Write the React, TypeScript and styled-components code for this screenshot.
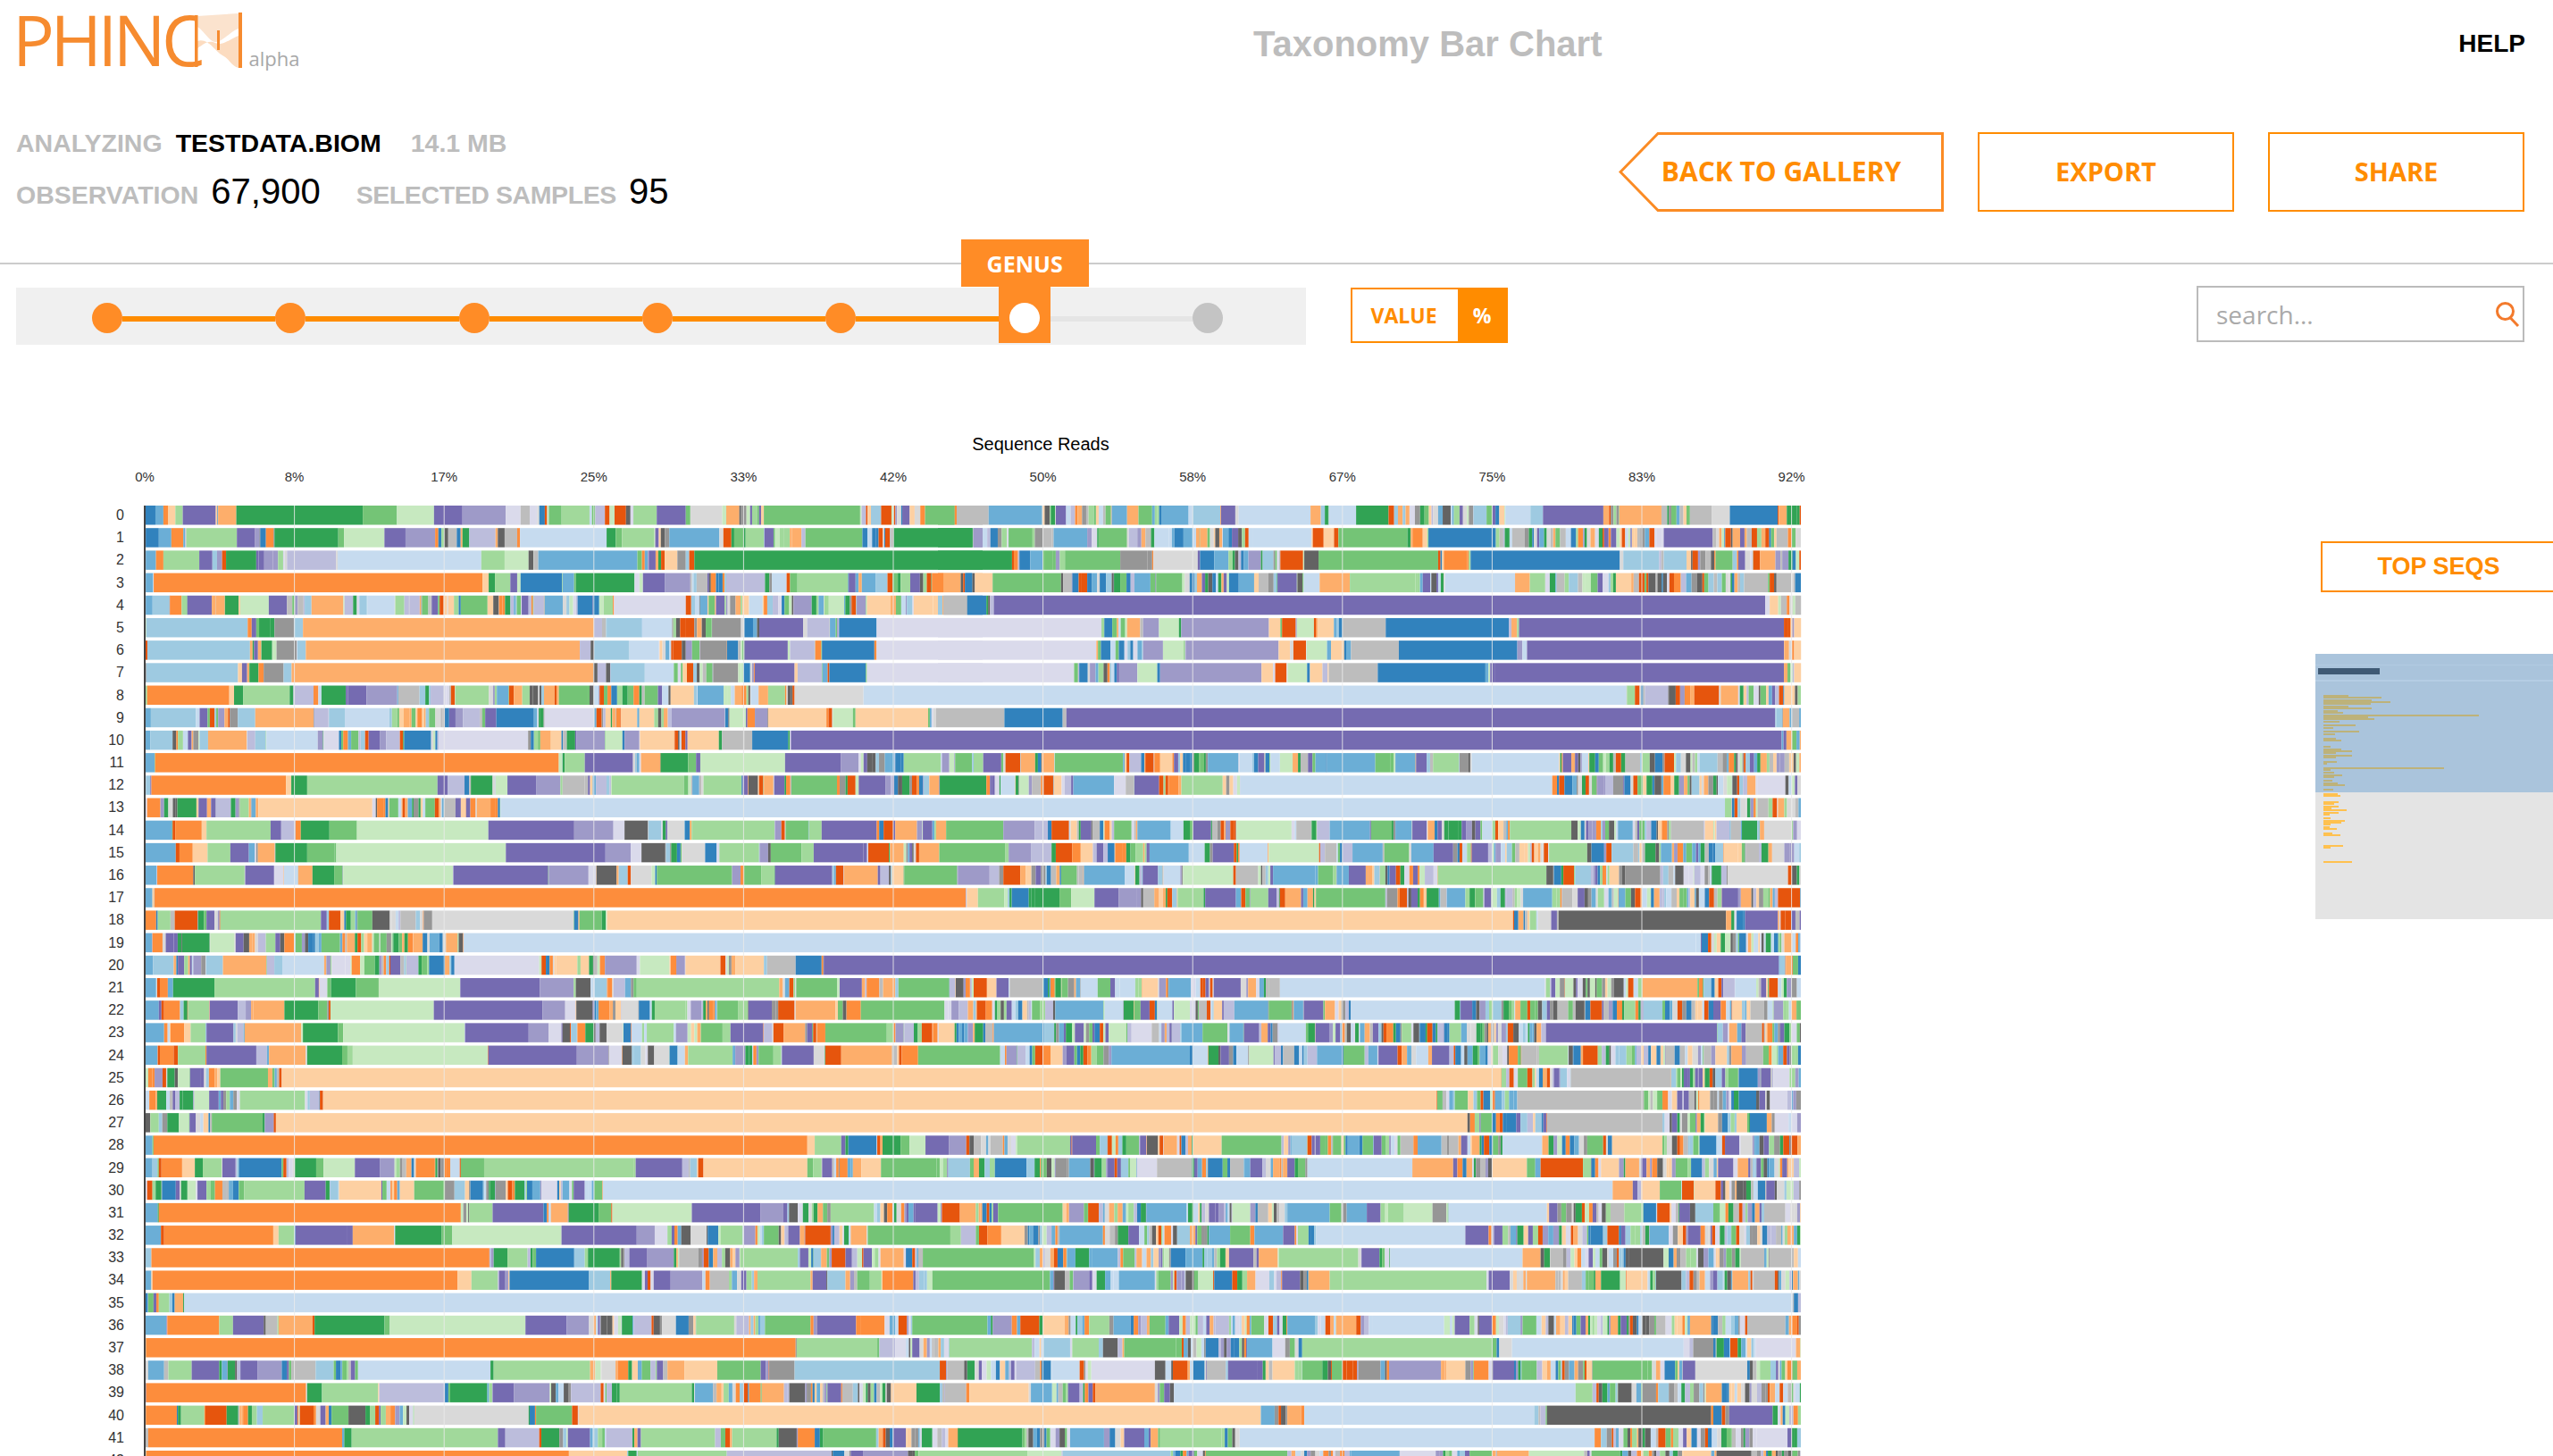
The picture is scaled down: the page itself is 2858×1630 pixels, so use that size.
import { FC, Fragment } from 'react';
import styled, { createGlobalStyle } from 'styled-components';

const ORANGE = '#ff8c00';
const SOFT_ORANGE = '#ff8c26';

const GlobalStyle = createGlobalStyle`
    html, body {
        margin: 0;
        padding: 0;
        background: #fff;
    }
    #root {
        width: 2858px;
        height: 1630px;
        overflow: hidden;
    }
`;

// d3 category20c, keyed by a letter so that the rows below stay short
const PALETTE: Record<string, string> = {
    a: '#3182bd', b: '#6baed6', c: '#9ecae1', d: '#c6dbef',
    e: '#e6550d', f: '#fd8d3c', g: '#fdae6b', h: '#fdd0a2',
    i: '#31a354', j: '#74c476', k: '#a1d99b', l: '#c7e9c0',
    m: '#756bb1', n: '#9e9ac8', o: '#bcbddc', p: '#dadaeb',
    q: '#636363', r: '#969696', s: '#bdbdbd', t: '#d9d9d9',
};
const KEYS = Object.keys(PALETTE);

const BAR_START = 163;
const BAR_END = 2016;
const AXIS_X = 162;
const TICK_STEP = 167.6;
const ROW_TOP = 566;
const ROW_PITCH = 25.19;
const ROW_HEIGHT = 21.5;
const CHART_TOP = 386;

// the big blocks of each row, read off the screenshot: colour + from-to.
// whatever lies between them is filled with thin slivers.
const GROUPS: { left: number; right: number; scale: number; rows: [string, string][] }[] = [
    {
        left: 100,
        right: 1050,
        scale: 1.568,
        rows: [
            ['a97-116 b116-130 f130-138 h138-151 k151-164 m164-222 g226-258 i258-480 j480-540 l540-605 m605-655 n655-731 p731-757 s757-773 j807-829 k829-878 o888-905 e922-942 k955-996 m996-1047 t1055-1111 g1118-1141 j1184-1353 c1372-1389 e1390-1408 m1427-1440 j1467-1519 s1523-1568',
             'j0-29 s33-89 b89-183 i198-206 m207-225 b305-332 g332-352 j352-376 b392-440 c447-496 m497-522 d528-654 g654-672 d686-734 i734-791 q886-900 c940-963 d996-1040 c1040-1062 m1062-1168 g1196-1270 s1320-1358 t1358-1390 a1390-1474 g1476-1490 i1490-1508'],
            ['a99-122 b122-144 f144-165 k170-259 m259-291 a300-310 f312-324 i325-437 j437-447 l447-518 m518-555 n555-607 q623-630 s630-645 i655-667 o667-713 q717-729 s729-751 d756-908 i908-924 j924-935 k935-991 b1018-1106 e1113-1127 j1132-1148 k1152-1184 m1185-1201 g1233-1250 j1257-1357 a1374-1381 e1397-1405 i1412-1550 n1552-1568',
             'i0-61 n62-78 a92-105 j124-166 r170-184 s184-200 b203-262 j282-332 o335-350 d380-405 a415-431 b431-447 g460-473 b500-510 m516-527 d552-656 e658-677 h677-690 j703-824 f833-851 a861-973 s1008-1030 m1274-1360 e1382-1392 g1395-1408 s1472-1492'],
            ['b99-117 f117-130 k130-193 m193-216 e233-240 i240-293 m297-307 n307-322 o347-433 d436-688 k688-729 l729-771 s780-788 b788-962 f970-975 m982-994 h1010-1032 r1033-1047 e1053-1062 i1062-1568',
             'i0-130 a143-162 b162-184 j188-202 j223-320 r320-368 t378-456 a460-485 b485-510 n545-567 c570-589 e601-641 q643-668 j668-878 f888-929 a935-1197 c1203-1266 c1274-1314 j1365-1395 m1405-1417 e1431-1443 g1443-1470 n1482-1493 a1500-1506'],
            ['b99-112 f113-690 h690-701 i701-712 k712-739 m739-751 a757-830 b831-851 i854-957 m972-1010 n1010-1055 s1066-1085 f1091-1100 o1118-1186 d1198-1224 j1230-1243 k1243-1332 m1333-1345 b1356-1380 c1380-1401 e1401-1410 k1424-1441 m1441-1458 e1470-1478 f1479-1500 g1500-1529 a1537-1550 h1555-1568',
             'f0-10 g10-40 a48-60 h65-96 j96-216 s220-235 a236-247 e251-262 a284-295 c295-305 i309-320 j320-331 b345-373 j383-429 a511-528 b528-555 s563-580 m596-630 q631-640 d642-670 g670-723 k723-838 m851-864 q866-875 d890-1013 g1013-1039 k1039-1066 s1086-1100 j1146-1158 h1190-1217 q1247-1260 f1292-1304 s1415-1457 s1472-1498'],
            ['b99-111 c111-141 f142-162 m172-215 g222-237 i238-262 l265-315 m315-347 s366-376 c378-390 g390-446 o448-463 c474-487 d488-536 k537-553 o562-580 j584-595 m601-612 e615-622 h630-640 j652-699 f719-725 m759-771 o780-798 b799-831 a857-883 a884-895 k903-919 p921-1047 b1072-1085 j1087-1098 m1100-1115 h1146-1158 d1158-1182 f1184-1190 n1236-1268 k1290-1298 l1298-1325 i1327-1335 e1338-1346 n1347-1363 h1365-1406 c1435-1445 h1447-1481 s1499-1541 a1541-1568',
             'c0-8 s10-52 a52-85 m98-1452 h1460-1475 f1490-1495 s1505-1515'],
            ['c100-278 m285-293 i298-317 r325-359 c362-375 g375-885 o886-900 s900-907 c908-969 d970-1023 k1025-1030 e1046-1062 j1082-1092 r1093-1144 a1150-1165 b1165-1172 m1176-1253 o1260-1299 b1300-1310 a1316-1382 p1382-1568',
             'p0-287 a292-306 g332-355 n360-388 l388-423 n427-581 h581-601 e604-628 l630-660 h666-695 s710-786 a786-1002 m1020-1485 h1503-1515'],
            ['c102-282 m289-296 i302-321 r329-364 c365-380 g380-861 o861-880 c886-947 d948-1000 h1001-1006 e1025-1040 n1047-1058 j1058-1071 r1072-1118 a1119-1139 m1150-1226 o1230-1273 f1274-1285 a1286-1378 p1382-1568',
             'p0-278 a286-303 n360-395 l395-431 n435-598 h598-618 e624-646 l647-683 b683-690 h690-713 s725-809 a809-1017 m1034-1485 g1486-1494 h1503-1515'],
            ['c100-261 m268-277 i281-297 r306-341 c341-355 g355-885 o892-907 c915-975 d975-1026 e1049-1060 j1083-1094 r1095-1139 a1148-1160 m1168-1238 o1245-1286 b1287-1296 a1299-1363 p1365-1568',
             'p0-239 a248-263 n318-350 l351-385 n390-568 h568-588 e592-612 l614-648 h653-675 s686-772 a772-961 m977-1485 h1503-1515'],
        ],
    },
    {
        left: 160,
        right: 1090,
        scale: 1.686,
        rows: [
            ['f8-163 h163-172 i172-189 k189-277 o284-322 i337-383 m387-422 n422-480 s482-522 c522-533 o543-568 k590-653 b668-690 e691-700 g700-716 k716-730 q736-746 g757-777 j785-838 q843-851 e862-870 a884-895 i905-915 j915-926 j947-972 d980-992 h996-1040 b1047-1096 g1117-1130 d1147-1162 g1162-1180 k1180-1212 q1217-1223 t1230-1360 d1360-1568',
             'd0-1232 k1233-1248 o1267-1311 q1312-1325 e1360-1407 g1410-1443 i1446-1453 e1520-1528 h1530-1545'],
            ['b5-15 c15-100 m107-122 n142-154 r164-179 c179-212 g212-322 o323-350 c351-381 d381-465 k470-480 j507-515 f518-527 j540-552 m578-590 n590-604 o604-636 m646-667 a667-738 i747-750 p758-852 e856-866 f893-901 h902-933 h937-965 n998-1098 a1099-1105 l1107-1135 f1141-1155 n1155-1179 h1180-1290 e1294-1301 l1302-1340 h1345-1482 s1497-1568',
             's0-58 a58-168 s168-175 m175-1513 c1515-1526 g1527-1540 s1545-1558'],
            ['b5-14 c14-56 f63-66 m85-92 r95-105 c107-123 g123-196 o197-212 c212-232 d233-330 p341-370 f378-387 j393-407 m426-447 n447-459 o459-485 a493-544 l548-552 p558-727 a732-738 g750-770 h770-790 n818-872 l873-905 n909-937 h938-1003 e1004-1010 h1028-1087 s1093-1135 s1135-1150 a1150-1218 m1223-1568',
             'm0-1525 g1534-1545 j1545-1553'],
            ['b5-22 f23-785 i792-796 k796-834 m834-925 b932-937 g940-976 i977-1029 j1029-1044 l1052-1212 m1212-1317 n1317-1351 q1367-1376 a1420-1431 k1436-1506 n1508-1522 j1533-1565',
             'k0-18 m18-52 e60-88 g89-116 g128-152 j153-282 o294-316 e324-340 f341-352 h352-375 m378-386 a395-401 i416-425 j428-435 b442-500 d502-526 m537-548 d560-578 l578-602 s617-631 b645-665 b667-758 j758-787 b796-834 m835-855 k867-916 r917-934 d940-1105 i1107-1110 m1112-1128 m1135-1141 d1148-1160 i1162-1173 i1200-1207 e1212-1222 s1230-1258 k1262-1276 q1276-1285 a1286-1300 e1304-1322 c1370-1404 m1465-1473 g1485-1497'],
            ['c6-14 f16-270 h270-280 i280-310 k310-556 m556-575 o575-607 i619-660 l666-688 m688-742 n742-788 s792-834 h844-849 o855-875 k885-1021 b1037-1050 k1058-1130 m1132-1142 q1143-1161 e1163-1171 g1172-1190 m1192-1211 f1214-1222 j1224-1310 r1315-1326 e1330-1345 m1351-1402 a1418-1425 i1433-1447 a1465-1472 c1473-1484 g1485-1503 i1504-1568',
             'i0-24 m34-40 d51-78 i79-85 l86-104 s110-127 e132-150 h151-166 o172-184 b188-265 p265-287 s287-302 m303-350 e362-367 f368-387 k392-470 h483-490 d503-1092 f1092-1101 a1115-1130 b1130-1138 n1177-1190 o1192-1207 r1207-1226 a1228-1240 e1245-1253 i1270-1281 q1285-1298 f1302-1316 c1355-1370 q1432-1441 g1460-1476 p1480-1532 m1550-1555'],
            ['f8-33 i40-48 i65-101 m105-121 o138-166 k183-200 b205-213 h218-433 f442-455 j465-482 e490-495 b500-508 j533-551 s568-590 m610-618 g630-656 a670-674 d675-1568',
             'd0-1418 k1418-1430 a1431-1436 i1460-1466 s1480-1500 g1518-1530'],
            ['b5-55 e56-61 f61-111 h111-120 k120-241 m241-261 o261-287 f288-298 i298-352 j352-404 l404-652 m652-814 n814-888 p888-909 q909-953 c954-978 i981-987 t990-1022 a1023-1032 k1037-1192 n1193-1205 j1213-1256 k1257-1281 m1281-1385 e1398-1416 g1420-1461 m1472-1490 g1497-1516 j1516-1568',
             'j0-56 n56-115 o115-140 e147-180 h183-195 m202-222 s224-238 a238-245 f247-257 j265-298 b309-372 d372-396 i396-408 m414-448 s450-460 e491-495 l496-600 s609-637 i638-646 o648-672 b672-748 j750-789 b796-827 m828-855 g857-870 i896-914 m921-930 d960-978 h990-1000 k1012-1128 q1128-1140 a1146-1153 f1175-1184 j1192-1199 b1216-1244 s1316-1378 h1380-1396 o1402-1427 s1429-1448 i1450-1479 g1484-1492 t1492-1544'],
            ['b5-62 e62-69 f69-94 h94-122 k122-165 m165-200 g217-249 i250-310 j310-362 l365-685 m685-873 n873-921 p921-941 q941-986 c987-995 i997-1008 t1017-1061 a1062-1083 k1088-1163 n1164-1180 j1185-1243 k1243-1266 m1266-1360 e1369-1408 g1410-1436 e1459-1465 g1465-1503 j1503-1568',
             'j0-60 n66-108 o108-147 e155-186 f186-202 h202-225 m232-245 a253-266 f267-280 i288-296 j296-306 k306-320 b332-406 d406-436 i436-446 m451-491 d502-555 l557-652 o654-663 s663-685 o696-715 b715-772 j775-822 b826-868 m868-905 m940-971 n985-995 c1006-1016 h1030-1040 g1065-1070 k1086-1158 q1158-1166 a1166-1190 e1194-1204 c1204-1245 i1267-1287 b1297-1318 j1345-1356 i1372-1380 c1400-1415 h1416-1442 s1457-1482 i1487-1500 t1507-1530'],
            ['b5-26 f27-95 k98-192 m193-247 p248-265 d266-292 g293-320 i320-361 j361-377 l378-585 m586-765 n766-841 p841-855 q856-894 c898-915 t921-960 j970-1111 n1112-1128 j1135-1167 k1167-1192 m1193-1301 e1308-1322 g1323-1387 o1392-1408 h1414-1436 j1437-1537 n1538-1568',
             'n0-30 o30-48 e56-88 g88-98 m117-127 a138-146 j165-195 s198-207 b208-285 d285-304 i305-313 m319-348 d358-390 l395-490 s495-537 b565-645 j650-678 b685-708 m708-740 g745-752 k767-777 m785-797 o853-868 k876-1081 q1081-1094 a1095-1109 e1113-1133 c1135-1165 h1200-1218 r1230-1262 r1262-1296 q1324-1340 o1360-1372 i1393-1411 t1423-1537'],
            ['b5-18 f22-1553 h1555-1568',
             'h0-8 k8-58 a72-104 i116-162 j162-184 l184-228 m228-274 n274-307 q316-320 s320-340 g341-350 k385-434 m437-495 e505-513 k522-556 m556-572 e578-588 g588-618 j646-777 r780-800 e804-818 m826-838 i855-878 s881-892 b893-928 i936-946 j947-962 m964-977 b1037-1092 k1092-1100 s1110-1130 m1140-1153 k1178-1190 b1217-1230 a1380-1388 m1412-1443 g1448-1468 e1518-1560'],
            ['f5-25 k28-52 e60-103 i104-115 m120-135 k146-336 m336-347 e351-373 j405-433 q433-466 s486-515 r530-546 t546-813 a814-822 j824-866 h876-1568',
             'h0-1018 a1020-1028 k1050-1062 t1065-1090 q1104-1420 a1440-1452 m1456-1518 e1523-1532'],
            ['b5-17 f18-37 m43-58 i74-126 l127-173 m175-190 o217-232 k232-250 f267-285 j288-300 j337-372 g385-400 e405-412 j448-460 i473-483 g510-528 a528-537 b541-559 g572-594 q596-604 d605-1568',
             'd0-1363 a1374-1386 i1410-1418 a1445-1458 i1495-1505 g1530-1545'],
            ['b5-19 c19-58 m66-78 n95-110 r110-118 c119-151 g151-233 o234-248 c248-263 d263-342 p356-382 f394-410 j418-438 m467-486 o497-520 a540-570 p588-748 h780-820 k820-826 h826-842 n872-932 l938-994 f996-1007 n1008-1023 h1024-1090 h1118-1172 s1178-1232 a1232-1281 m1285-1568',
             'm0-1520 c1522-1532 g1533-1545 j1546-1556'],
            ['b5-25 e27-32 f32-47 i57-135 k135-325 m325-332 p333-348 i355-402 j402-445 l445-599 m599-749 n749-813 q817-845 c853-876 f877-886 o888-910 j926-932 k932-1201 b1212-1220 e1220-1228 j1233-1310 m1315-1357 f1366-1390 g1397-1420 j1426-1521 o1522-1533 q1534-1549',
             'e0-25 h25-43 m43-66 s68-130 a132-140 f145-153 i155-165 j166-177 r178-190 b193-201 d202-234 j234-258 m258-267 d276-305 h318-348 n350-363 b368-410 m453-504 g518-533 s558-578 d578-1078 k1080-1088 m1090-1098 l1116-1132 j1176-1186 q1208-1227 g1262-1366 c1378-1392 o1415-1435 d1437-1477 m1486-1496 e1501-1518'],
            ['b5-30 e35-40 f40-70 k85-125 m126-179 o179-194 g208-267 i267-331 j331-348 l354-549 m549-754 n754-797 p797-817 q818-849 f860-881 t903-935 a936-957 k966-1024 n1034-1054 j1084-1123 k1123-1142 m1143-1187 e1199-1230 g1232-1307 f1328-1355 j1355-1513 n1526-1540 o1540-1557',
             'e6-23 f23-35 m62-72 a84-92 j110-125 o135-150 b154-245 d247-282 i283-302 j303-315 m315-332 a342-346 d347-375 l378-408 s425-440 h453-469 o472-492 b492-556 j557-600 b604-622 m623-660 g663-682 a708-712 d712-908 i908-918 m919-941 n955-966 c980-996 i1000-1010 g1022-1032 j1032-1045 q1065-1073 s1102-1122 j1122-1131 q1136-1153 a1154-1164 e1164-1186 a1206-1214 k1228-1246 c1264-1300 a1305-1314 a1345-1355 m1396-1410 h1432-1450 s1466-1492 n1510-1528'],
            ['b5-40 f52-78 h78-90 k90-118 m120-171 o178-190 g192-299 i302-368 j368-378 l378-607 m608-728 n728-766 p766-790 q792-806 c808-818 f820-835 i835-851 q862-875 t875-906 a907-921 d922-942 k951-1002 n1006-1028 j1053-1094 k1094-1109 m1109-1171 o1172-1188 e1190-1209 g1210-1250 e1265-1271 f1272-1288 j1288-1404 k1404-1417 n1421-1436 o1437-1455 e1470-1490 f1491-1500 h1502-1532 b1550-1557',
             'i2-18 s22-36 b38-134 c134-152 i174-186 m191-208 a228-238 l255-288 o290-298 p298-336 s336-350 o374-390 b392-432 j432-479 b483-509 m510-539 g543-555 d576-627 i631-644 m645-671 m683-692 q704-712 i720-727 b729-738 f779-792 k808-826 q830-841 a842-853 e856-866 a888-895 k898-920 m1080-1403 c1404-1414 g1426-1441 s1457-1488 i1530-1540'],
            ['b5-27 e28-32 f32-58 k66-118 m120-214 o214-234 g238-307 i310-376 j376-386 k386-396 l396-651 m652-819 n819-879 p880-904 q905-923 c927-940 q953-965 t965-993 a994-1009 d1010-1023 k1029-1113 n1118-1137 f1152-1158 j1162-1190 k1190-1205 m1206-1266 t1266-1287 e1288-1318 g1318-1414 f1432-1463 j1463-1568',
             'j0-50 n62-81 o82-98 e116-130 f130-145 h145-168 m175-190 e207-215 f215-222 j232-245 b260-408 d414-442 i443-462 m466-482 d496-518 l520-566 o568-580 s584-605 o630-648 b648-695 j698-738 b745-762 m764-800 g808-818 d835-858 m865-898 q926-932 i942-951 b955-966 k980-990 f1010-1027 s1034-1063 k1067-1122 q1123-1131 a1132-1146 e1150-1178 c1218-1232 s1306-1323 a1323-1333 s1378-1392 h1400-1422 g1430-1450 s1458-1490'],
            ['f10-18 n22-37 i46-60 l66-88 m89-108 j146-236 e257-262 h262-1568',
             'h0-995 k996-1005 j1027-1045 a1067-1074 m1095-1105 c1107-1120 s1127-1315 c1316-1326 i1352-1358 m1368-1376 c1400-1412 j1424-1443 a1444-1480 m1486-1504 p1510-1540'],
            ['f12-24 i27-44 i75-95 l97-125 m125-143 k183-306 o315-333 e334-340 h340-1568',
             'h0-874 j875-885 j908-933 a962-975 b984-997 s1026-1265 j1290-1300 m1340-1350 h1370-1390 a1444-1477 m1483-1494 p1503-1536'],
            ['k14-30 i46-68 l68-87 m88-100 j130-226 n230-246 e247-251 h251-1568',
             'h0-932 j957-978 a1005-1024 c1032-1045 c1060-1072 s1082-1300 m1318-1328 g1365-1372 h1380-1405 h1440-1460 a1465-1497 p1512-1538'],
            ['b5-18 f20-1254 h1254-1268 k1268-1318 m1318-1326 a1332-1385 e1386-1392 i1396-1430 j1430-1447 l1447-1477 m1477-1521 n1521-1554 q1560-1568',
             's0-14 s32-55 b58-64 k82-182 m186-231 c238-252 e253-261 j288-312 m314-326 q327-348 e351-358 g359-384 a392-400 h414-468 j468-581 c600-629 e630-638 m645-654 j678-694 b706-728 j734-754 m755-770 s806-830 b838-883 s897-915 m920-932 g940-955 j980-990 d998-1073 g1073-1085 j1158-1188 h1205-1300 q1318-1328 j1358-1368 a1370-1402 m1418-1445 t1448-1470 e1528-1540 e1542-1555'],
            ['b5-18 e30-35 f35-74 h74-98 i98-113 k113-149 m150-175 a181-262 e265-271 i287-327 j327-341 l341-400 m400-447 n447-475 s490-497 f515-550 i552-556 q557-562 d580-598 j600-644 k644-927 m930-1018 o1018-1030 c1033-1046 e1048-1058 h1058-1254 j1254-1265 k1265-1281 m1282-1301 f1315-1330 g1340-1356 h1356-1393 j1393-1498 c1520-1561',
             'g0-10 a40-100 c100-115 i115-125 j127-138 r155-176 b180-220 i228-242 k242-250 m253-266 c278-292 l295-307 p308-346 s346-412 a442-470 s484-510 b511-522 m522-545 g565-578 m592-606 j612-626 d630-828 g828-905 m905-913 i944-948 h978-1044 j1045-1060 e1070-1150 k1150-1165 a1166-1173 h1184-1218 n1218-1227 g1230-1256 j1325-1348 a1354-1375 m1405-1434 g1442-1462'],
            ['e8-18 i24-35 a36-62 i72-84 l84-100 m103-120 f136-150 j181-191 k191-305 m305-345 c353-368 h370-450 j452-460 f474-480 h485-511 j512-568 r570-588 c588-608 a618-642 i655-665 r666-685 i702-720 a725-735 b735-750 p752-782 b792-805 m813-834 j852-867 d868-1568',
             'd0-1206 g1206-1244 h1260-1295 j1295-1336 e1337-1359 h1360-1400 q1440-1452 a1480-1494 m1496-1512 t1516-1530'],
        ],
    },
    {
        left: 160,
        right: 160,
        scale: 0.843,
        rows: [
            ['b2-14 f15-300 k308-330 m330-378 g385-401 i402-430 j430-442 l443-518 m518-583 n583-604 q612-618 k649-690 m729-750 e754-771 g771-786 j807-868 n874-888 e892-902 b947-985 m1006-1012 l1028-1045 s1052-1062 b1080-1120 j1120-1131 b1136-1155 m1155-1168 k1175-1190 l1190-1217 r1217-1230 d1232-1325 m1327-1335 i1352-1358 s1385-1398 k1398-1415 a1416-1428 e1429-1441 m1450-1460 c1465-1482 s1530-1550', ''],
            ['b2-17 e17-20 f20-123 h123-128 k128-143 m144-193 g198-237 i238-282 j282-292 l292-395 m395-466 n466-483 p483-495 q510-517 t517-532 a533-543 k545-566 n567-578 j586-600 m609-620 e625-649 g668-683 j684-762 k762-772 o772-786 e789-797 f797-810 h810-832 a840-845 b865-906 i920-930 m930-940 c976-988 b1006-1026 j1026-1045 b1049-1076 m1076-1087 k1090-1100 d1107-1248 m1248-1270 m1275-1283 i1297-1303 a1366-1378 e1382-1393 b1422-1440 m1458-1470', ''],
            ['c2-8 f8-327 i331-344 k344-363 a371-407 c407-417 i420-450 m459-476 n476-501 s506-524 k564-618 m620-628 c633-640 e650-663 m680-688 g696-718 a720-726 j736-841 b872-880 i880-893 b896-920 j925-936 a970-984 b984-1000 m1025-1048 g1053-1071 k1072-1147 m1150-1167 d1177-1302 g1302-1319 s1328-1340 q1402-1435 s1508-1530 s1535-1558', ''],
            ['b2-8 f9-297 h297-310 k310-335 m336-342 a346-421 c421-441 i442-471 m482-498 n498-528 s535-553 k580-630 m632-645 c646-663 j674-686 k686-697 f698-727 j745-856 q860-870 n878-893 i900-908 b921-955 j958-970 q984-992 l996-1010 a1011-1028 g1042-1050 p1050-1063 m1075-1092 g1100-1120 k1120-1268 m1270-1290 g1306-1333 s1345-1358 i1376-1394 h1400-1420 q1428-1452 g1500-1515 s1520-1540', ''],
            ['j5-10 k15-25 g30-38 d39-1557 a1558-1562', ''],
            ['b2-22 f23-72 k72-85 m85-114 s116-127 g128-160 i162-228 j228-233 l233-361 m361-400 n400-421 q432-438 i452-462 o463-480 q482-488 t490-503 a503-515 k522-558 o560-572 j587-630 m636-673 f677-700 e713-721 j726-797 n802-820 e828-846 h850-870 k893-912 b916-932 j950-965 m968-978 o1012-1025 j1046-1058 b1080-1106 g1126-1145 d1160-1228 m1238-1252 m1261-1273 c1288-1300 j1302-1315 g1385-1392 s1428-1437 g1460-1480 s1514-1550', ''],
            ['f3-616 k617-693 o695-710 p710-720 m726-733 k761-839 c850-875 k877-902 q906-920 j926-975 a1003-1015 b1042-1066 p1066-1078 k1094-1273 t1280-1292 d1292-1454 r1463-1482 i1485-1492 e1498-1505 p1522-1560', ''],
            ['b5-20 k24-46 m46-72 i80-87 m92-108 n108-131 s140-163 c163-180 d203-328 k331-422 t433-446 f448-458 j471-479 m485-491 g495-511 h511-542 j542-583 r591-615 c615-752 e752-758 s759-775 i778-785 o824-842 a848-857 d858-884 p895-955 q955-965 e972-986 a991-1002 s1004-1022 m1024-1052 h1066-1087 j1094-1113 j1122-1132 e1136-1142 r1147-1168 n1176-1225 h1230-1248 f1256-1270 m1274-1294 j1301-1310 j1368-1420 a1436-1446 m1453-1465 t1465-1514 k1526-1536', ''],
            ['f3-154 i155-169 k169-222 o223-285 i290-325 m330-350 n350-384 o404-432 k450-518 b521-538 f572-583 g584-605 q610-625 m646-659 s660-670 h706-730 i730-752 s757-777 h780-836 b838-858 m873-884 g899-955 d973-1352 k1352-1368 q1392-1405 r1415-1428 c1430-1440 g1475-1490', ''],
            ['f3-32 i33-36 k36-58 e59-79 i79-90 k113-143 e148-161 j178-194 q194-210 t256-364 a365-370 j371-405 h411-1055 b1055-1068 g1080-1093 d1096-1313 q1325-1480 a1482-1490 m1497-1538', ''],
            ['f5-188 i190-197 k197-335 m335-342 o342-374 i376-393 m401-422 o437-462 k470-540 k556-598 q600-617 f618-634 j642-692 m708-720 i735-745 g760-770 i769-830 b875-907 m926-945 g951-958 k960-1018 d1035-1370 f1370-1376 e1430-1437 p1523-1552', ''],
            ['f3-402 h402-457 i458-466 k467-551 o551-650 a651-662 m668-680 n680-722 k732-835 l835-867 c868-970 j1003-1080 b1140-1186 p1187-1220 j1252-1273 g1278-1308 l1308-1360 j1367-1394 h1454-1480 q1485-1518', ''],
        ],
    },
];

interface Segment {
    x: number;
    w: number;
    color: string;
}

const parseBlocks = (text: string, origin: number, scale: number): Segment[] =>
    [...text.matchAll(/([a-t])(\d+)-(\d+)/g)].map((m) => {
        const x = Math.max(BAR_START, origin + Number(m[2]) / scale);
        return { x, w: origin + Number(m[3]) / scale - x, color: PALETTE[m[1]] };
    });

const buildRow = (left: Segment[], right: Segment[], seed: number): Segment[] => {
    let state = seed * 7919 + 13;
    const random = () => {
        state = (state * 16807) % 2147483647;
        return state / 2147483647;
    };
    const blocks = [...left, ...right].sort((a, b) => a.x - b.x);
    const out: Segment[] = [];
    let cursor = BAR_START;
    const fill = (until: number) => {
        while (cursor < until) {
            const w = Math.min(1.5 + random() * 5, until - cursor);
            out.push({ x: cursor, w, color: PALETTE[KEYS[Math.floor(random() * KEYS.length)]] });
            cursor += w;
        }
    };
    blocks.forEach((block) => {
        if (block.w <= 0) return;
        fill(block.x);
        out.push(block);
        cursor = Math.max(cursor, block.x + block.w);
    });
    fill(BAR_END);
    return out;
};

const CHART_ROWS = GROUPS.flatMap((group) =>
    group.rows.map(([l, r]) => [parseBlocks(l, group.left, group.scale), parseBlocks(r, group.right, group.scale)]),
).map(([l, r], i) => buildRow(l, r, i + 1));

const TICKS = ['0%', '8%', '17%', '25%', '33%', '42%', '50%', '58%', '67%', '75%', '83%', '92%'];

// y, end of bar in minimap pixels, taken from the thumbnail
const MINI_BARS: [number, number][] = [
    [46, 37], [48, 74], [51, 63], [53, 84], [55, 62], [58, 37], [60, 63], [63, 25], [65, 31], [68, 183],
    [70, 59], [72, 66], [75, 27], [79, 45], [82, 20], [86, 49], [89, 22], [94, 23], [96, 29], [103, 17],
    [106, 29], [108, 41], [110, 23], [113, 41], [115, 23], [120, 24], [122, 13], [127, 144], [129, 17],
    [132, 21], [135, 30], [137, 21], [141, 19], [144, 25], [146, 33], [151, 20],
    [156, 25], [158, 28], [165, 26], [167, 21], [170, 26], [172, 18], [174, 35], [177, 26], [179, 16],
    [183, 17], [186, 33], [188, 29], [190, 17], [193, 16], [195, 24], [200, 19], [202, 28], [214, 31],
    [216, 17], [232, 41],
];

const Page = styled.div`
    width: 2858px;
    height: 1630px;
    overflow: hidden;
    background: #fff;
    font-family: 'Liberation Sans', Arial, sans-serif;
`;

const TopBar = styled.header`
    height: 98px;
    padding: 0 31px 0 14px;
    display: grid;
    grid-template-columns: 1389px auto 1fr;
    align-items: center;
    box-sizing: border-box;
`;

const Logo = styled.div`
    display: flex;
    align-items: flex-start;
    height: 86px;
`;

const LogoWord = styled.span`
    margin-top: -4px;
    font-family: 'Open Sans', sans-serif;
    font-size: 78px;
    line-height: 84px;
    letter-spacing: -4.5px;
    color: #f68b2f;
`;

const LogoMark = styled.svg`
    width: 56px;
    height: 66px;
    margin-left: -11px;
    margin-top: 8px;
`;

const LogoTag = styled.span`
    font-family: 'Open Sans', sans-serif;
    font-size: 22px;
    line-height: 28px;
    margin: 45px 0 0 8px;
    color: #a8a8a8;
`;

const PageTitle = styled.h1`
    margin: 0;
    font-size: 40px;
    font-weight: 700;
    color: #bdbdbd;
`;

const HelpLink = styled.span`
    justify-self: end;
    font-size: 28px;
    font-weight: 700;
    color: #000;
`;

const InfoBar = styled.section`
    height: 198px;
    padding: 46px 32px 0 18px;
    display: flex;
    justify-content: space-between;
    align-items: flex-start;
    box-sizing: border-box;
    border-bottom: 2px solid #cccccc;
`;

const Summary = styled.div`
    display: flex;
    flex-direction: column;
    gap: 16px;
`;

const SummaryRow = styled.div`
    display: flex;
    align-items: baseline;
    height: ${(p) => p.$height}px;
`;

const Caption = styled.span`
    font-size: 28.5px;
    font-weight: 700;
    color: #bdbdbd;
    margin-left: ${(p) => p.$gap ?? 0}px;
    letter-spacing: ${(p) => p.$tight ?? 0}px;
`;

const FileName = styled.span`
    font-size: 28.5px;
    font-weight: 700;
    color: #000;
    margin-left: 15px;
`;

const Count = styled.span`
    font-size: 40px;
    color: #000;
    margin-left: 14px;
`;

const Actions = styled.div`
    display: flex;
    gap: 38px;
    margin-top: 4px;
`;

const ActionButton = styled.button`
    width: 287px;
    height: 89px;
    padding: 0 0 3px;
    background: #fff;
    border: 2px solid ${ORANGE};
    color: ${ORANGE};
    font-family: 'Open Sans', sans-serif;
    font-size: 29px;
    font-weight: 700;
    box-sizing: border-box;
`;

const BackButton = styled.button`
    position: relative;
    width: 364px;
    height: 89px;
    padding: 0 0 3px;
    background: none;
    border: none;
    color: ${ORANGE};
    font-family: 'Open Sans', sans-serif;
    font-size: 30px;
    font-weight: 700;
    text-align: center;
`;

const BackOutline = styled.svg`
    position: absolute;
    left: 0;
    top: 0;
    width: 364px;
    height: 89px;
`;

const BackLabel = styled.span`
    position: relative;
`;

const Controls = styled.section`
    height: 90px;
    padding: 26px 32px 0 18px;
    display: flex;
    align-items: flex-start;
    box-sizing: border-box;
`;

const SliderTrack = styled.div`
    width: 1444px;
    height: 64px;
    padding: 4px 93px 0 85px;
    display: flex;
    align-items: center;
    background: #f0f0f0;
    box-sizing: border-box;
`;

const Dot = styled.span`
    flex: none;
    width: 34px;
    height: 34px;
    border-radius: 50%;
    background: ${(p) => p.$color};
`;

const Connector = styled.span`
    flex: 1;
    height: 6px;
    margin-top: 2px;
    background: ${(p) => p.$color};
`;

const ActiveStop = styled.div`
    position: relative;
    flex: none;
    display: flex;
`;

const ActiveStem = styled.span`
    position: absolute;
    left: -12px;
    top: -18px;
    width: 58px;
    height: 63px;
    background: ${SOFT_ORANGE};
`;

const ActiveTab = styled.span`
    position: absolute;
    left: -54px;
    top: -71px;
    width: 143px;
    height: 53px;
    display: flex;
    align-items: center;
    justify-content: center;
    background: ${SOFT_ORANGE};
    color: #fff;
    font-family: 'Open Sans', sans-serif;
    font-size: 25px;
    font-weight: 700;
`;

const ActiveDot = styled(Dot)`
    position: relative;
`;

const ValueToggle = styled.div`
    width: 176px;
    height: 62px;
    margin-left: 50px;
    display: flex;
    border: 2px solid ${ORANGE};
    box-sizing: border-box;
    font-family: 'Open Sans', sans-serif;
    font-size: 23px;
    font-weight: 700;
`;

const ToggleOption = styled.span`
    flex: ${(p) => (p.$active ? '0 0 54px' : 1)};
    padding-right: ${(p) => (p.$active ? 0 : 3)}px;
    display: flex;
    align-items: center;
    justify-content: center;
    background: ${(p) => (p.$active ? ORANGE : '#fff')};
    color: ${(p) => (p.$active ? '#fff' : ORANGE)};
`;

const SearchBox = styled.label`
    width: 367px;
    height: 63px;
    margin-left: auto;
    margin-top: -2px;
    padding: 0 2px 0 20px;
    display: flex;
    align-items: center;
    border: 2px solid #bbbbbb;
    box-sizing: border-box;
`;

const SearchInput = styled.input`
    flex: 1;
    min-width: 0;
    border: none;
    outline: none;
    padding: 0;
    font-family: 'Open Sans', sans-serif;
    font-size: 28px;
    &::placeholder {
        color: #aaaaaa;
        opacity: 1;
    }
`;

const SearchIcon = styled.svg`
    width: 30px;
    height: 30px;
    flex: none;
`;

const ChartRow = styled.section`
    display: flex;
    justify-content: space-between;
`;

const ChartSvg = styled.svg`
    flex: none;
    display: block;
    font-family: 'Liberation Sans', Arial, sans-serif;
`;

const Side = styled.aside`
    width: 266px;
    padding-top: 220px;
    display: flex;
    flex-direction: column;
    gap: 69px;
`;

const TopSeqsButton = styled.button`
    width: 260px;
    height: 57px;
    margin-left: 6px;
    padding: 0 0 0 2px;
    background: #fff;
    border: 2px solid ${ORANGE};
    border-right: none;
    color: ${ORANGE};
    font-family: 'Liberation Sans', Arial, sans-serif;
    font-size: 27px;
    font-weight: 700;
    box-sizing: border-box;
`;

const Minimap = styled.svg`
    display: block;
    width: 266px;
    height: 297px;
`;

const LogoGlyph: FC = () => (
    <LogoMark viewBox="0 0 56 66">
        <path d="M6 4 L52 1 L52 18 C40 22 30 40 20 30 C14 24 10 18 6 16 Z" fill="#fbe3ce" />
        <path d="M6 32 C18 28 26 44 34 48 C42 52 44 60 52 62 L52 26 C42 30 34 38 26 34 C18 30 12 36 6 40 Z" fill="#fcdcc0" />
        <rect x="3" y="3" width="3.5" height="58" fill="#f68b2f" />
        <rect x="28" y="20" width="3" height="22" fill="#f68b2f" />
        <rect x="52" y="0" width="4" height="62" fill="#f68b2f" />
    </LogoMark>
);

const TaxonomyChart: FC = () => (
    <ChartSvg width={2040} height={1630 - CHART_TOP} viewBox={`0 ${CHART_TOP} 2040 ${1630 - CHART_TOP}`}>
        <text x={1165} y={504} textAnchor="middle" fontSize={20} fill="#000">
            Sequence Reads
        </text>
        {TICKS.map((tick, i) => (
            <text key={tick} x={AXIS_X + i * TICK_STEP} y={539} textAnchor="middle" fontSize={15} fill="#333">
                {tick}
            </text>
        ))}
        {CHART_ROWS.map((segments, row) => {
            const y = ROW_TOP + row * ROW_PITCH;
            return (
                <g key={row}>
                    <text x={139} y={y + 16} textAnchor="end" fontSize={16} fill="#333">
                        {row}
                    </text>
                    {segments.map((s, i) => (
                        <rect key={i} x={s.x} y={y} width={s.w} height={ROW_HEIGHT} fill={s.color} />
                    ))}
                </g>
            );
        })}
        {TICKS.slice(1).map((tick, i) => (
            <line
                key={tick}
                x1={AXIS_X + (i + 1) * TICK_STEP}
                x2={AXIS_X + (i + 1) * TICK_STEP}
                y1={ROW_TOP}
                y2={1630}
                stroke="#ebebeb"
                strokeOpacity={0.85}
            />
        ))}
        <line x1={AXIS_X} x2={AXIS_X} y1={ROW_TOP} y2={1630} stroke="#444" strokeWidth={2} />
    </ChartSvg>
);

const Thumbnail: FC = () => (
    <Minimap viewBox="0 0 266 297">
        <rect width="266" height="297" fill="#e4e4e4" />
        <rect width="266" height="155" fill="#aac4dc" />
        <rect y="12" width="266" height="1" fill="#b2cbe2" />
        <rect y="29" width="266" height="2" fill="#b5cde4" />
        <rect x="3" y="16" width="69" height="7" fill="#3f5a75" />
        {MINI_BARS.map(([y, end]) => (
            <rect key={y} x="9" y={y} width={end - 9} height="2" fill={y < 155 ? '#bdb27a' : '#ffc14f'} />
        ))}
    </Minimap>
);

const App: FC = () => (
    <Page>
        <GlobalStyle />
        <TopBar>
            <Logo>
                <LogoWord>PHINC</LogoWord>
                <LogoGlyph />
                <LogoTag>alpha</LogoTag>
            </Logo>
            <PageTitle>Taxonomy Bar Chart</PageTitle>
            <HelpLink>HELP</HelpLink>
        </TopBar>
        <InfoBar>
            <Summary>
                <SummaryRow $height={32}>
                    <Caption>ANALYZING</Caption>
                    <FileName>TESTDATA.BIOM</FileName>
                    <Caption $gap={33}>14.1 MB</Caption>
                </SummaryRow>
                <SummaryRow $height={40}>
                    <Caption>OBSERVATION</Caption>
                    <Count>67,900</Count>
                    <Caption $gap={40} $tight={-0.4}>SELECTED SAMPLES</Caption>
                    <Count>95</Count>
                </SummaryRow>
            </Summary>
            <Actions>
                <BackButton>
                    <BackOutline viewBox="0 0 364 89">
                        <path d="M44 1.5 H362.5 V87.5 H44 L2 44.5 Z" fill="#fff" stroke="#fb8b24" strokeWidth="3" />
                    </BackOutline>
                    <BackLabel>BACK TO GALLERY</BackLabel>
                </BackButton>
                <ActionButton>EXPORT</ActionButton>
                <ActionButton>SHARE</ActionButton>
            </Actions>
        </InfoBar>
        <Controls>
            <SliderTrack>
                {[0, 1, 2, 3, 4].map((i) => (
                    <Fragment key={i}>
                        <Dot $color={SOFT_ORANGE} />
                        <Connector $color={ORANGE} />
                    </Fragment>
                ))}
                <ActiveStop>
                    <ActiveStem />
                    <ActiveTab>GENUS</ActiveTab>
                    <ActiveDot $color="#fff" />
                </ActiveStop>
                <Connector $color="#e5e5e5" />
                <Dot $color="#c4c4c4" />
            </SliderTrack>
            <ValueToggle>
                <ToggleOption>VALUE</ToggleOption>
                <ToggleOption $active>%</ToggleOption>
            </ValueToggle>
            <SearchBox>
                <SearchInput placeholder="search..." />
                <SearchIcon viewBox="0 0 30 30" fill="none" stroke="#f37a2c" strokeWidth="3">
                    <circle cx="12.5" cy="11.5" r="9" />
                    <line x1="18" y1="18.5" x2="27" y2="28" />
                </SearchIcon>
            </SearchBox>
        </Controls>
        <ChartRow>
            <TaxonomyChart />
            <Side>
                <TopSeqsButton>TOP SEQS</TopSeqsButton>
                <Thumbnail />
            </Side>
        </ChartRow>
    </Page>
);

export default App;
